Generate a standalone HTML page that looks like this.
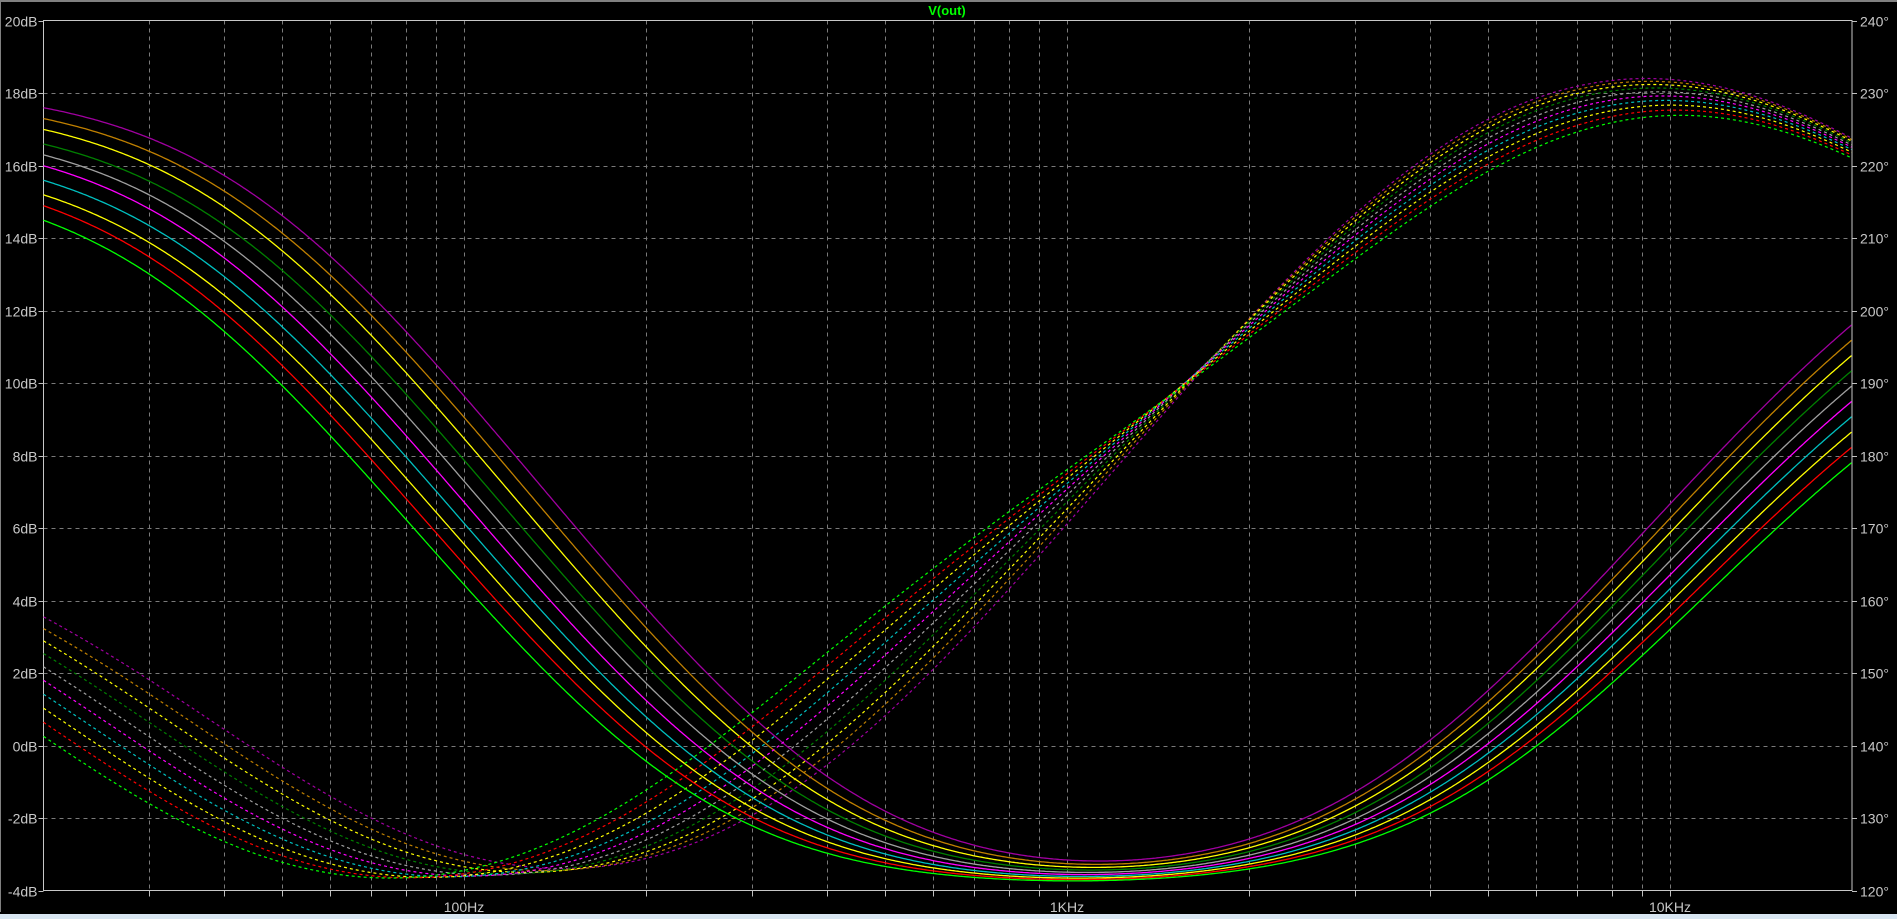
<!DOCTYPE html>
<html><head><meta charset="utf-8"><style>
html,body{margin:0;padding:0;background:#000;width:1897px;height:919px;overflow:hidden}
svg{display:block}
text{font-family:"Liberation Sans Narrow","Liberation Sans",sans-serif;}
</style></head><body>
<svg id="s" width="1897" height="919" xmlns="http://www.w3.org/2000/svg">
<rect width="1897" height="919" fill="#000"/>
<line x1="0" y1="1" x2="1897" y2="1" stroke="#808080" stroke-width="2"/>
<line x1="0.5" y1="0" x2="0.5" y2="912" stroke="#808080"/>
<rect x="0" y="914" width="1897" height="5" fill="#d8e6f2"/>
<text x="947" y="15" fill="#00ff00" font-size="13" font-weight="bold" text-anchor="middle">V(out)</text>
<g id="g"></g>
</svg>
<script>
(function(){
var NS="http://www.w3.org/2000/svg",g=document.getElementById("g");
var L=43.5,R=1852,T=20.5,B=890.5;
function X(f){return 464+603*(Math.log10(f)-2);}
function Y(d){return T+(20-d)*(B-T)/24;}
function el(n,a,t){var e=document.createElementNS(NS,n);for(var k in a)e.setAttribute(k,a[k]);if(t!==undefined)e.textContent=t;g.appendChild(e);return e;}
for(var i=0;i<=12;i++){var d=20-2*i,y=Math.round(Y(d))+0.5;
 if(i>0&&i<12)el("line",{x1:L,y1:y,x2:R,y2:y,stroke:"#7a7a7a","stroke-dasharray":"4,4"});
 el("line",{x1:L-5,y1:y,x2:L,y2:y,stroke:"#c0c0c0"});
 el("line",{x1:R,y1:y,x2:R+5,y2:y,stroke:"#c0c0c0"});
 el("text",{x:L-6,y:y+5,fill:"#c8c8c8","font-size":"14","text-anchor":"end"},d+"dB");
 el("text",{x:R+8,y:y+5,fill:"#c8c8c8","font-size":"14"},(240-10*i)+"°");
}
var fs=[];for(var m=10;m<=10000;m*=10)for(var k=1;k<=9;k++){var f=m*k;if(f>20&&f<20000)fs.push(f);}
fs.forEach(function(f){var x=Math.round(X(f))+0.5;
 el("line",{x1:x,y1:T,x2:x,y2:B,stroke:"#7a7a7a","stroke-dasharray":"4,4"});
 el("line",{x1:x,y1:B,x2:x,y2:B+6,stroke:"#c0c0c0"});
});
[[100,"100Hz"],[1000,"1KHz"],[10000,"10KHz"]].forEach(function(p){
 el("text",{x:X(p[0]),y:912,fill:"#c8c8c8","font-size":"14","text-anchor":"middle"},p[1]);});
el("rect",{x:L,y:T,width:R-L,height:B-T,fill:"none",stroke:"#c8c8c8"});
var cols=["#a000a0","#c08000","#ffff00","#008000","#a0a0a0","#ff00ff","#00c0c0","#ffff00","#ff0000","#00ff00"];
var V20=[17.6,17.3,17.0,16.6,16.3,16.0,15.6,15.2,14.9,14.5];
var Rd=function(x){return x*180/Math.PI;};
var n=1.15,F=-4.0,N2=2*n,p=26000,M2=2.2;
for(var j=0;j<10;j++){
 var t=j/9;
 var xc=(650-130*t)*1.2098, fc=Math.pow(10,(xc-464)/603+2);
 var Lv=0-F, am=fc*Math.pow(Math.pow(10,Lv/10)-1,1/N2);
 var A=Math.pow(am,N2), W=Math.pow(20,N2);
 var Bn=(A+W)/Math.pow(10,(V20[j]-F)/10)-W; if(Bn<1)Bn=1;
 var T20=11.6-3.8*t, pterm=10*Math.log10(1+Math.pow(20000/p,2));
 var cm=20000/Math.pow(Math.pow(10,(T20-F+pterm)/10)-1,1/M2), C=Math.pow(cm,M2);
 var a=624*Math.pow(285/624,t),b=44*Math.pow(21.5/44,t),c=2450*Math.pow(3750/2450,t);
 var pm="",pp="";
 for(var x=L;x<=R;x+=2){
  var f=Math.pow(10,(x-464)/603+2),fN=Math.pow(f,N2),fM=Math.pow(f,M2),f2=f*f;
  var mag=F+10*Math.log10((A+fN)/(Bn+fN))+10*Math.log10(1+fM/C)-10*Math.log10(1+f2/(p*p));
  var ph=180+Rd(Math.atan(f/a)-Math.atan(f/b)+Math.atan(f/c)-Math.atan(f/p));
  var pd=(ph-120)/5-4;
  pm+=(x==L?"M":"L")+x.toFixed(1)+","+Y(mag).toFixed(1);
  pp+=(x==L?"M":"L")+x.toFixed(1)+","+Y(pd).toFixed(1);
 }
 el("path",{d:pp,fill:"none",stroke:cols[j],"stroke-width":"1.2","stroke-dasharray":"3,3"});
 el("path",{d:pm,fill:"none",stroke:cols[j],"stroke-width":"1.3"});
}
})();
</script>
</body></html>
